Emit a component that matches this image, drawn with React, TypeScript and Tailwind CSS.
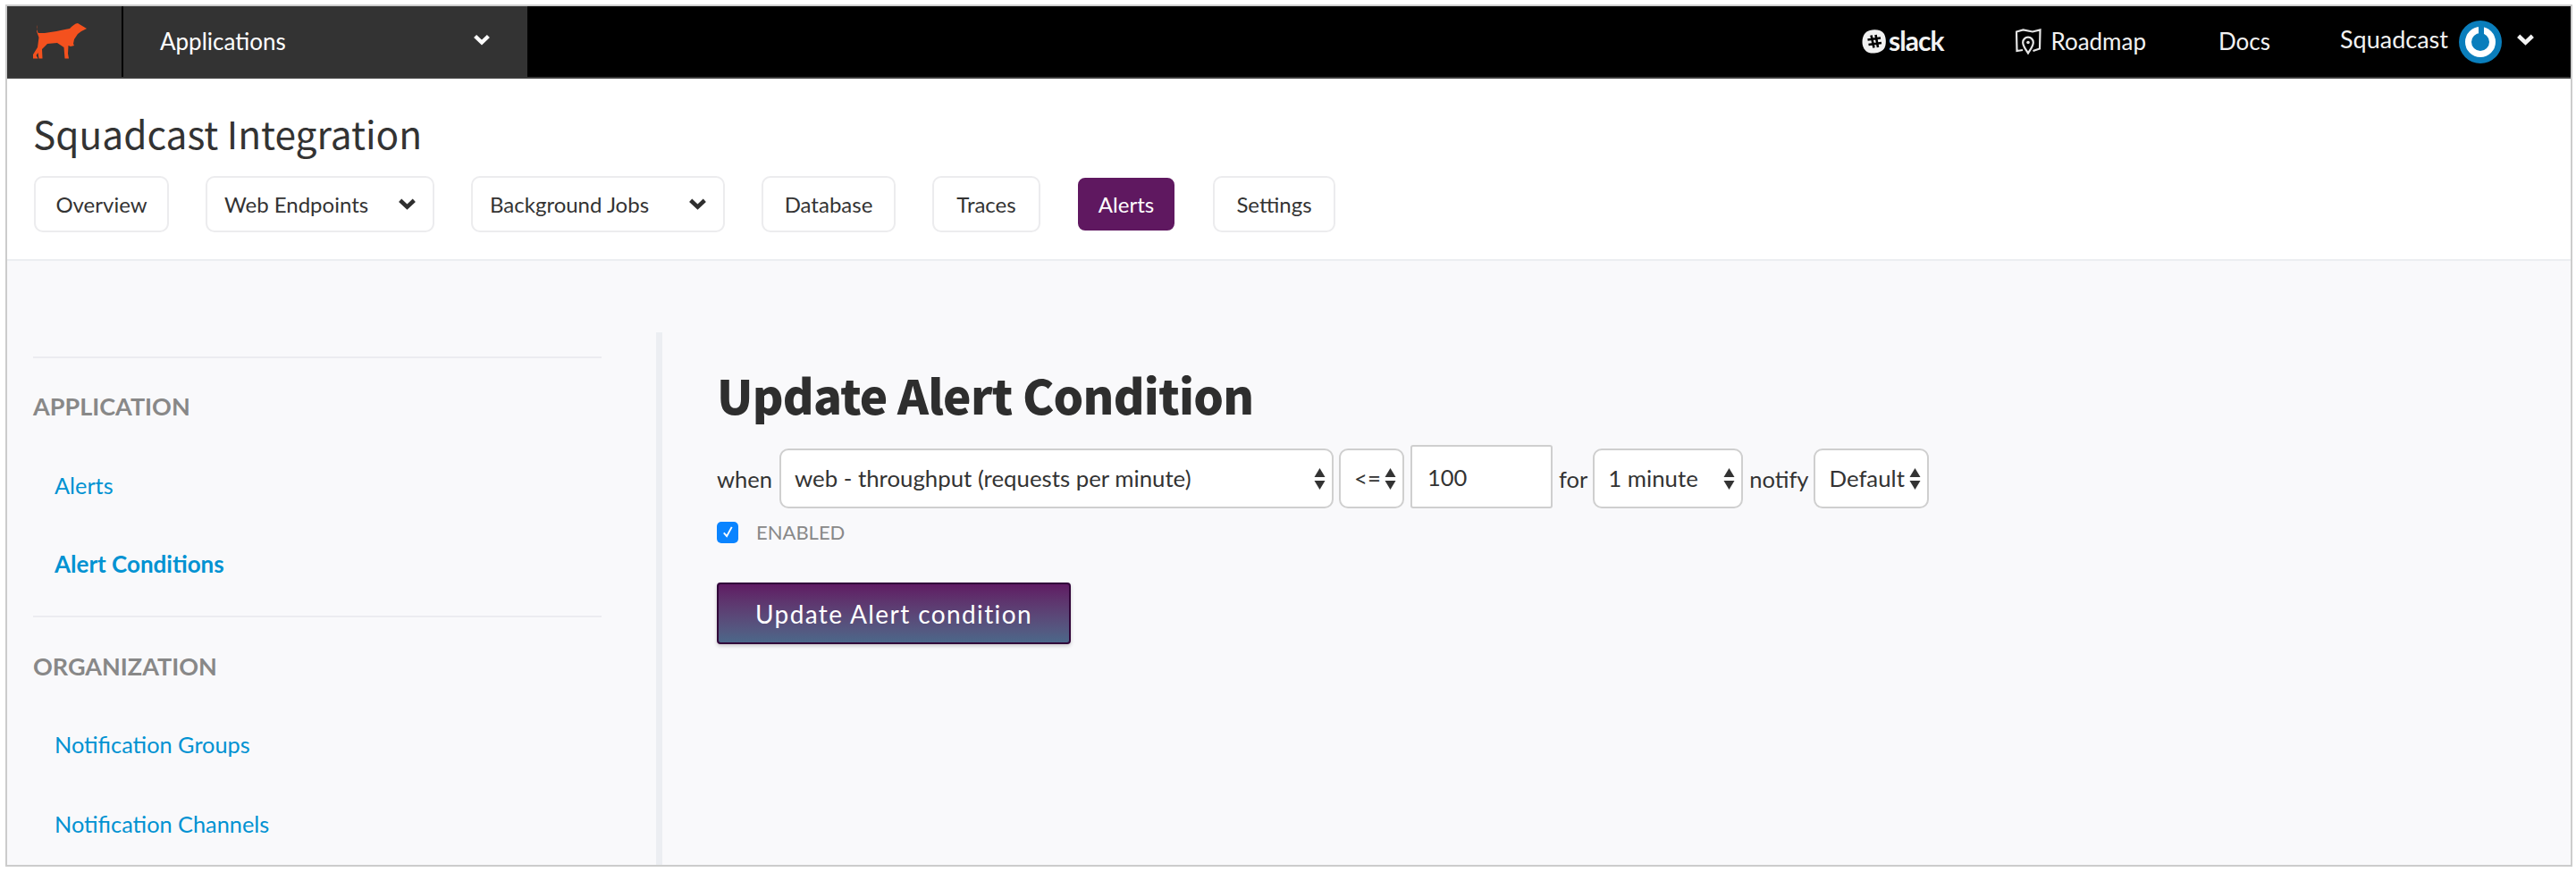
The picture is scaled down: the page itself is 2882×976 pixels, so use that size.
import React from 'react';

const proxima = 'font-["Lato","Liberation_Sans",sans-serif]';

const Chevron = ({ className }: { className?: string }) => (
  <svg viewBox="0 0 18 12" className={className} fill="none" stroke="currentColor" strokeWidth="4.4">
    <path d="M1.6 2 L9 9 L16.4 2" />
  </svg>
);

const Arrows = () => (
  <svg viewBox="0 0 13 24" className="w-[13px] h-[24px] text-[#333]" fill="currentColor">
    <path d="M6.5 0 L12.5 10 L0.5 10 Z" />
    <path d="M0.5 14 L12.5 14 L6.5 24 Z" />
  </svg>
);

const Dog = () => (
  <svg viewBox="0 0 60 40" className="w-[60px] h-[40px] text-[#f4511e]" fill="currentColor">
    <path d="M5 2 C3.5 5 4.5 9 6 11 L13 11 C22 10 30 8 41 6 C44 3 47 0 50 0 L55 3 L60 6 L54 9 L50 12 L46 18 L45 23 L46 25 L42 26 L39.5 25 L39 34 L40 39.5 L35.5 39.5 L34.5 27 L27 22 L16 23 L10 29 L10.5 39.5 L6.5 39.5 L5.5 33 L3.5 36 L5.5 39.5 L0 39.5 L0 35 L5 27 L6.5 16 L4 9 Z" />
  </svg>
);

const Slack = () => (
  <svg viewBox="0 0 27 27" className="w-[27px] h-[27px]">
    <path d="M9 1 C15 -0.5 22 0.5 25 5 C27.5 10 27.5 18 24.5 22 C21 26 13 27.5 8 26 C3 24.5 0.5 19 0.5 14 C0.5 8 3 2.5 9 1 Z" fill="#f2f2f2" />
    <path d="M10.5 6.5 L13.5 20.5 M15.5 6 L18 20 M6.5 11.5 L21 9.5 M7.5 17 L22 15" stroke="#000" strokeWidth="2.6" fill="none" />
  </svg>
);

const MapPin = () => (
  <svg viewBox="0 0 29 29" className="w-[29px] h-[29px]" fill="none" stroke="#e6e6e6" strokeWidth="2.2">
    <path d="M8 24 L1.5 25 L1 3.5 L8.5 1.5 L19 3.5 L27.5 1.5 L27 22.5 L19.5 25" />
    <path d="M14 27.5 C11.5 23 8.2 20 8.2 15.5 A5.8 5.8 0 0 1 19.8 15.5 C19.8 20 16.5 23 14 27.5 Z" />
    <circle cx="14" cy="15.5" r="1.8" fill="#e6e6e6" stroke="none" />
  </svg>
);

const Power = () => (
  <svg viewBox="0 0 48 48" className="w-[48px] h-[48px]">
    <circle cx="24" cy="24" r="24" fill="#0a7ebc" />
    <circle cx="24" cy="24" r="13.5" fill="none" stroke="#fff" strokeWidth="7" />
    <path d="M25 7 V24" stroke="#0a7ebc" strokeWidth="6" />
  </svg>
);

const Tab = ({ label, dropdown, active, className }: { label: string; dropdown?: boolean; active?: boolean; className: string }) => (
  <button
    className={`h-[63px] rounded-[10px] border-2 flex items-center text-[24px] ${className} ${
      active ? 'bg-[#5f1860] border-white text-white justify-center' : 'bg-white border-[#ececee] text-[#333]'
    } ${dropdown ? 'justify-between pl-[19px] pr-[19px]' : 'justify-center'}`}
  >
    {label}
    {dropdown && <Chevron className="w-[19px] h-[13px] text-[#2f2f2f]" />}
  </button>
);

const Select = ({ value, className }: { value: string; className: string }) => (
  <div className={`relative h-[67px] mt-[4px] rounded-[10px] border-2 border-[#cfcfcf] bg-white flex items-center pl-[15px] text-[25.8px] text-[#333] ${className}`}>
    {value}
    <div className="absolute right-[7px] top-[20px]">
      <Arrows />
    </div>
  </div>
);

const SideLink = ({ label, bold, className = '' }: { label: string; bold?: boolean; className?: string }) => (
  <div className={`pl-[24px] h-[30px] flex items-center text-[#0092d2] ${bold ? 'font-bold text-[26px]' : 'text-[25.3px]'} ${className}`}>{label}</div>
);

export default function App() {
  return (
    <div className="w-[2882px] h-[976px] bg-white pt-[5px] pl-[6px] pr-[4px] pb-[6px]">
      <div className={`h-full flex flex-col border-2 border-[#cccccc] ${proxima}`}>
        {/* Top nav */}
        <div className="h-[81px] shrink-0 bg-black flex items-center border-b-2 border-[#3a3a3a] text-white text-[26px]">
          <div className="w-[582px] h-full bg-[#333333] flex items-center">
            <div className="w-[130px] h-full flex items-center pl-[29px] pb-[1px] border-r-2 border-black">
              <Dog />
            </div>
            <span className="ml-[41px] mb-[1px]">Applications</span>
            <Chevron className="w-[18px] h-[13px] ml-[210px] mb-[4px]" />
          </div>
          <div className="ml-auto flex items-center pr-[41px] text-[#f2f2f2]">
            <Slack />
            <span className="ml-[3px] font-bold text-[30px] tracking-[-1px] mb-[2px]">slack</span>
            <div className="ml-[81px]"><MapPin /></div>
            <span className="ml-[10px]">Roadmap</span>
            <span className="ml-[81px]">Docs</span>
            <span className="ml-[78px] mb-[4px] text-[27px]">Squadcast</span>
            <div className="ml-[12px]"><Power /></div>
            <Chevron className="w-[19px] h-[13px] ml-[17px] mb-[4px]" />
          </div>
        </div>

        {/* Header */}
        <div className="h-[204px] shrink-0 bg-white border-b-2 border-[#eceef1] pl-[30px] pt-[31px]">
          <h1 className="-ml-[1px] font-['Noto_Sans_CJK_SC',sans-serif] text-[42.4px] leading-[60px] text-[#333]">Squadcast Integration</h1>
          <div className="flex gap-[41px] mt-[18px]">
            <Tab label="Overview" className="w-[151px]" />
            <Tab label="Web Endpoints" dropdown className="w-[256px]" />
            <Tab label="Background Jobs" dropdown className="w-[284px]" />
            <Tab label="Database" className="w-[150px]" />
            <Tab label="Traces" className="w-[121px]" />
            <Tab label="Alerts" active className="w-[112px] -ml-[1px]" />
            <Tab label="Settings" className="w-[137px]" />
          </div>
        </div>

        {/* Body */}
        <div className="flex-1 min-h-0 bg-[#f9f9fb] flex pl-[29px] pt-[107px]">
          <aside className="w-[636px] shrink-0">
            <div className="border-t-2 border-[#ececf0] pt-[40px]">
              <div className="text-[27px] font-bold text-[#888] h-[28px] flex items-center">APPLICATION</div>
              <SideLink label="Alerts" className="mt-[60px]" />
              <SideLink label="Alert Conditions" bold className="mt-[57px]" />
            </div>
            <div className="border-t-2 border-[#ececf0] mt-[43px] pt-[41px]">
              <div className="text-[27px] font-bold text-[#888] h-[28px] flex items-center">ORGANIZATION</div>
              <SideLink label="Notification Groups" className="mt-[59px]" />
              <SideLink label="Notification Channels" className="mt-[59px]" />
            </div>
          </aside>
          <main className="ml-[61px] -mt-[27px] border-l-[7px] border-[#eceef2] pl-[61px] flex-1 pt-[31px]">
            <h2 className="font-['Noto_Sans_CJK_SC',sans-serif] font-black text-[53px] leading-[76px] tracking-[-0.75px] text-[#2e2e2e]">Update Alert Condition</h2>
            <div className="flex items-start mt-[19px] text-[25.5px] text-[#333]">
              <span className="mt-[19px] mr-[8px]">when</span>
              <Select value="web - throughput (requests per minute)" className="w-[620px]" />
              <Select value="<=" className="w-[73px] ml-[6px]" />
              <input
                readOnly
                value="100"
                className="w-[159px] h-[71px] ml-[7px] border-2 border-[#cfcfcf] rounded-[3px] bg-white pl-[17px] text-[25.5px] text-[#333] outline-none"
              />
              <span className="mt-[19px] ml-[7px] mr-[6px]">for</span>
              <Select value="1 minute" className="w-[168px]" />
              <span className="mt-[19px] ml-[7px] mr-[6px]">notify</span>
              <Select value="Default" className="w-[129px]" />
            </div>
            <div className="flex items-center mt-[10px]">
              <div className="w-[24px] h-[24px] rounded-[5px] bg-[#0a84ff] flex items-center justify-center">
                <svg viewBox="0 0 16 16" className="w-[15px] h-[15px]" fill="none" stroke="#fff" strokeWidth="2">
                  <path d="M3 9 L6.5 13 L12.5 2" />
                </svg>
              </div>
              <span className="ml-[20px] text-[22px] text-[#888]">ENABLED</span>
            </div>
            <button className="mt-[40px] w-[396px] h-[69px] rounded-[4px] border-2 border-[#32063a] bg-gradient-to-b from-[#5f1a63] to-[#4b6789] text-white text-[28px] tracking-[1.4px] shadow-[0_2px_4px_rgba(0,0,0,0.2)]">
              Update Alert condition
            </button>
          </main>
        </div>
      </div>
    </div>
  );
}
